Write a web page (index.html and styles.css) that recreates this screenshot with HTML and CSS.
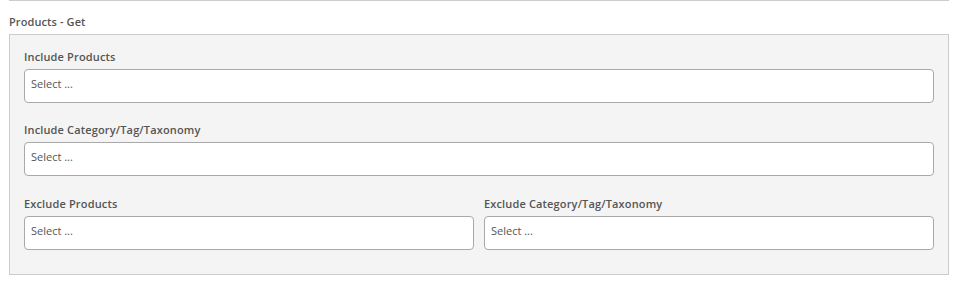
FILE: index.html
```html
<!DOCTYPE html>
<html lang="en">
<head>
<meta charset="utf-8">
<title>Products - Get</title>
<link rel="stylesheet" href="styles.css">
</head>
<body>
<div class="page">
  <div class="title">Products - Get</div>
  <div class="panel">
    <div class="field">
      <div class="label">Include Products</div>
      <div class="select">Select ...</div>
    </div>
    <div class="field">
      <div class="label">Include Category/Tag/Taxonomy</div>
      <div class="select">Select ...</div>
    </div>
    <div class="split">
      <div class="field">
        <div class="label">Exclude Products</div>
        <div class="select">Select ...</div>
      </div>
      <div class="field">
        <div class="label">Exclude Category/Tag/Taxonomy</div>
        <div class="select">Select ...</div>
      </div>
    </div>
  </div>
</div>
</body>
</html>
```

FILE: styles.css
```css
* { box-sizing: border-box; }

html, body {
  margin: 0;
  padding: 0;
  background: #ffffff;
}

body {
  font-family: "Open Sans", "Liberation Sans", sans-serif;
  font-size: 11px;
  line-height: 15px;
  color: #555555;
}

.page {
  margin: 0 9px;
  border-top: 1px solid #cccccc;
  padding-top: 13px;
}

.title {
  font-weight: 600;
  color: #555555;
  margin-bottom: 5px;
  letter-spacing: 0.1px;
}

.panel {
  background: #f4f4f4;
  border: 1px solid #cccccc;
  padding: 14px 14px 24px;
  display: flex;
  flex-direction: column;
  gap: 19px;
}

.label {
  font-weight: 600;
  color: #555555;
  margin-bottom: 5px;
  letter-spacing: 0.15px;
}

.select {
  height: 34px;
  background: #ffffff;
  border: 1px solid #a9a9a9;
  border-radius: 4px;
  padding: 6px 6px 5px;
  color: #555555;
}

.split {
  margin-top: 1px;
  display: grid;
  grid-template-columns: 1fr 1fr;
  gap: 10px;
}
```
